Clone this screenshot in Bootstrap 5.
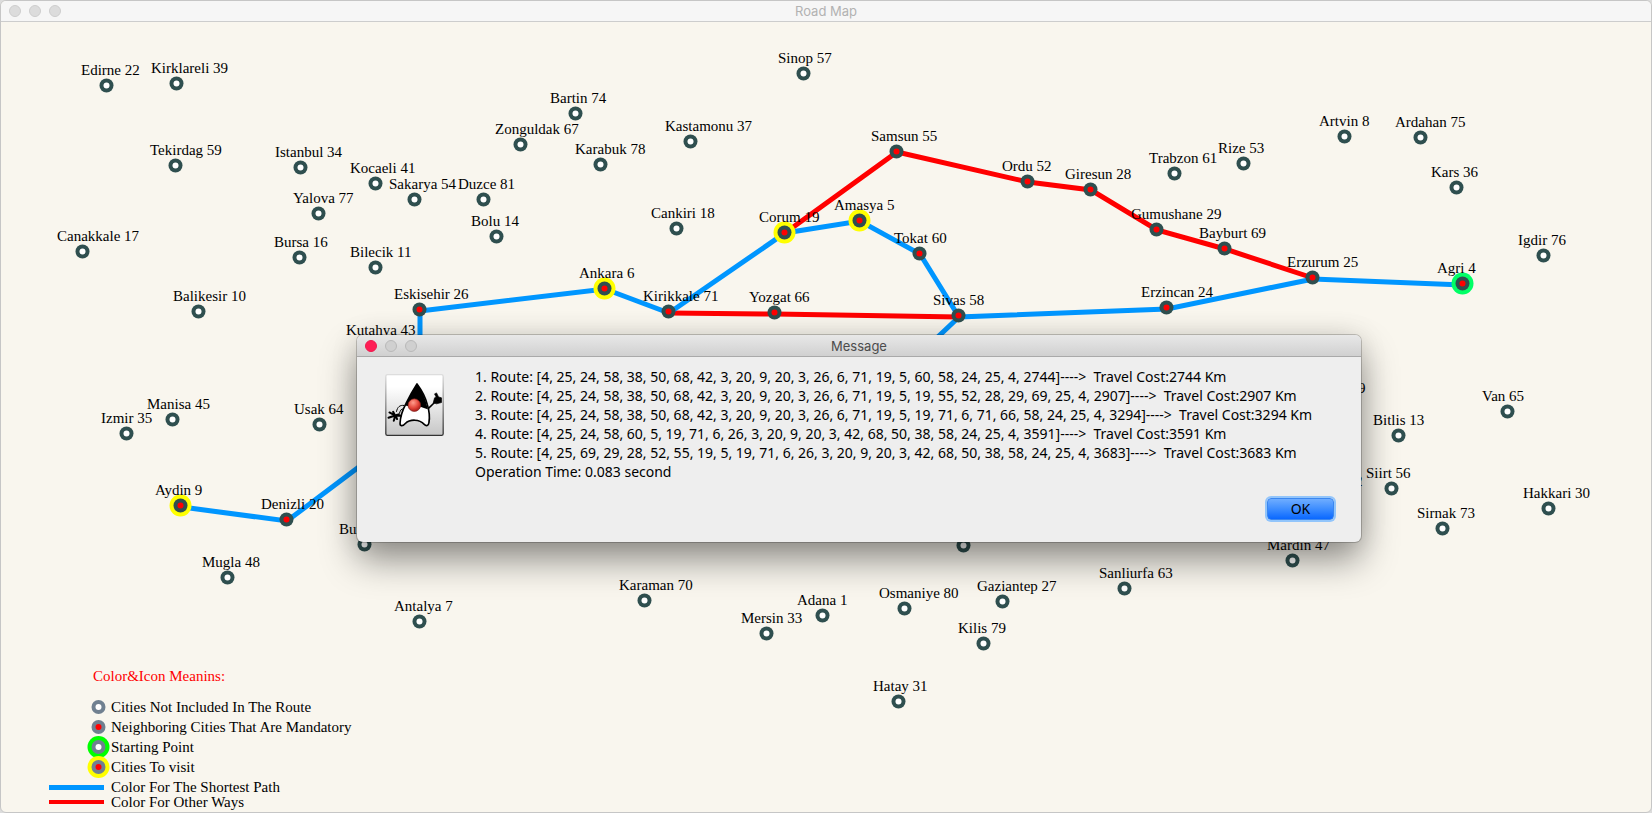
<!DOCTYPE html>
<html lang="en">
<head>
<meta charset="utf-8">
<meta name="viewport" content="width=device-width, initial-scale=1">
<title>Road Map</title>
<link href="https://cdn.jsdelivr.net/npm/bootstrap@5.3.0/dist/css/bootstrap.min.css" rel="stylesheet">
<style>
  body { background: #dcdcdc; }
  .window { border: 1px solid #c6c6c6; border-radius: 6px; background: #f9f6ee; }
  .titlebar { height: 21px; background: #f6f6f6; border-bottom: 1px solid #cdcdcd; font: 13px/20px Inter, sans-serif; color: #b2b2b2; }
  .lights { left: 8px; top: 4px; }
  .dot { width: 12px; height: 12px; border-radius: 50%; background: #dcdcdc; border: 1px solid #cdcdcd; }
  .map-area { font: 15px/20px "Liberation Serif", serif; color: #000; }
  .map-svg { left: -1px; top: -22px; overflow: visible; }
  .way { fill: none; stroke: #f00; stroke-width: 5; }
  .shortest { fill: none; stroke: #0096ff; stroke-width: 5; }

  .legend-title { color: #f00; padding-left: 92px; margin-bottom: 11px; }
  .legend-row { height: 20px; }
  .legend-row.tight { height: 10px; line-height: 10px; }
  .legend-mark { width: 103px; margin-right: 7px; height: 20px; overflow: visible; }
  .legend { padding-bottom: 5px; }

  .message { left: 356px; top: 334px; width: 1004px; border-radius: 6px; background: #eee;
    box-shadow: 0 0 0 1px rgba(0,0,0,.2), 0 18px 36px rgba(0,0,0,.42), 0 0 28px rgba(0,0,0,.1); }
  .message .titlebar { height: 22px; line-height: 22px; background: linear-gradient(#e8e8e8, #d0d0d0); border-color: #a9a9a9; color: #4c4c4c; border-radius: 6px 6px 0 0; }
  .message .lights { top: 5px; }
  .message .dot { background: #d0d0d0; border-color: #b9b9b9; }
  .message .dot.close-dot { background: #ff1d55; border-color: #ee1a4e; padding: 0; }
  .message-main { padding: 10px 20px 0 28px; gap: 31px; font: 14px/19px "Noto Sans", sans-serif; color: #000; }
  .duke { width: 59px; height: 62px; margin-top: 7px; flex: none; }
  .message-foot { padding: 17px 27px 22px; }
  .ok-btn { width: 67px; height: 22px; padding: 0; border: 1px solid #3b87f0; border-radius: 4px; font: 14px/20px "Noto Sans", sans-serif; color: #000;
    background: linear-gradient(#6fadff, #3d8dff 50%, #0a68ff); box-shadow: 0 0 0 2px #92c5fb; }
</style>
</head>
<body>
<div class="window vh-100 d-flex flex-column overflow-hidden position-relative">
  <header class="titlebar text-center position-relative flex-shrink-0">
    <div class="lights position-absolute d-flex gap-2"><span class="dot"></span><span class="dot"></span><span class="dot"></span></div>
    Road Map
  </header>

  <main class="map-area flex-grow-1 position-relative d-flex flex-column justify-content-end">
    <svg class="map-svg position-absolute w-100 h-100" aria-label="Cities and routes">
      <defs>
        <g id="plain"><circle r="7" fill="#2f4f4f"/><circle r="3" fill="#fff"/></g>
        <g id="stop"><circle r="7" fill="#2f4f4f"/><circle r="3" fill="#f00"/></g>
        <g id="visit"><circle r="11" fill="#ff0"/><use href="#stop"/></g>
        <g id="start"><circle r="11" fill="#00ff66"/><use href="#stop"/></g>
      </defs>
      <polyline class="way" points="785,233 897,152 1028,182 1091,190 1157,230 1225,249 1313,278"/>
      <polyline class="way" points="669,313 775,314 959,317"/>
      <polyline class="shortest" points="1463,285 1313,279 1167,309 959,317 869,402"/>
      <polyline class="shortest" points="182,507 287,521 420,421 420,311 605,289 669,313 785,233 860,221 920,254 959,317"/>
      <g id="cities"></g>
    </svg>

    <section class="legend position-relative">
      <div class="legend-title">Color&amp;Icon Meanins:</div>
      <div class="legend-row d-flex"><svg class="legend-mark"><circle cx="97.5" cy="10" r="7" fill="#708090"/><circle cx="97.5" cy="10" r="3" fill="#fff"/></svg><span>Cities Not Included In The Route</span></div>
      <div class="legend-row d-flex"><svg class="legend-mark"><circle cx="97.5" cy="10" r="7" fill="#708090"/><circle cx="97.5" cy="10" r="3" fill="#f00"/></svg><span>Neighboring Cities That Are Mandatory</span></div>
      <div class="legend-row d-flex"><svg class="legend-mark"><circle cx="97.5" cy="10" r="11" fill="#0f0"/><circle cx="97.5" cy="10" r="7" fill="#708090"/><circle cx="97.5" cy="10" r="3" fill="#fff"/></svg><span>Starting Point</span></div>
      <div class="legend-row d-flex"><svg class="legend-mark"><circle cx="97.5" cy="10" r="11" fill="#ff0"/><circle cx="97.5" cy="10" r="7" fill="#708090"/><circle cx="97.5" cy="10" r="3" fill="#f00"/></svg><span>Cities To visit</span></div>
      <div class="legend-row d-flex"><svg class="legend-mark"><rect x="48" y="8" width="55" height="5" fill="#0096ff"/></svg><span>Color For The Shortest Path</span></div>
      <div class="legend-row tight d-flex"><svg class="legend-mark"><rect x="48" y="3" width="55" height="4" fill="#f00"/></svg><span>Color For Other Ways</span></div>
    </section>
  </main>

  <div class="message position-absolute" role="dialog" aria-labelledby="message-title">
    <div class="titlebar text-center position-relative">
      <div class="lights position-absolute d-flex gap-2"><button type="button" class="dot close-dot" aria-label="Close"></button><span class="dot"></span><span class="dot"></span></div>
      <span id="message-title">Message</span>
    </div>
    <div class="message-main d-flex">
      <svg class="duke" viewBox="15 16 177 187" aria-hidden="true">
        <defs>
          <linearGradient id="tile" x1="0" y1="0" x2="0" y2="1"><stop offset=".2" stop-color="#fff"/><stop offset="1" stop-color="#c6c6c6"/></linearGradient>
          <linearGradient id="edge" x1="0" y1="0" x2="0" y2="1"><stop offset="0" stop-color="#ddd"/><stop offset="1" stop-color="#333"/></linearGradient>
          <radialGradient id="nose" cx=".4" cy=".3" r=".7"><stop offset="0" stop-color="#ff9d8d"/><stop offset=".6" stop-color="#e4483c"/><stop offset="1" stop-color="#a81c18"/></radialGradient>
        </defs>
        <rect x="17" y="18" width="173" height="183" rx="5" fill="url(#tile)" stroke="url(#edge)" stroke-width="4"/>
        <path d="M77 107C86 88 98 66 111 46C123 62 136 84 142 108C147 124 150 146 147 163C146 172 139 174 133 168C118 152 91 151 75 166C67 175 59 173 60 164C61 144 68 124 77 107Z" fill="#fff" stroke="#000" stroke-width="5" stroke-linejoin="round"/>
        <path d="M76 111C86 88 98 66 111 46C123 62 138 88 143 122L121 115L88 114Z" fill="#000"/>
        <circle cx="103" cy="110" r="19" fill="url(#nose)" stroke="#7c1f1a" stroke-width="2"/>
        <path d="M72 111C60 109 52 115 49 130" fill="none" stroke="#000" stroke-width="3"/>
        <path d="M68 121C59 123 61 133 54 141" fill="none" stroke="#000" stroke-width="3"/>
        <path d="M28 132L44 141L56 138M25 148L45 141L62 142M41 157L46 140L51 152M39 130L46 143" fill="none" stroke="#000" stroke-width="6" stroke-linecap="round" stroke-linejoin="round"/>
        <path d="M144 121L164 102" fill="none" stroke="#000" stroke-width="5"/>
        <path d="M164 88L169 86L164 76L170 73L176 85L185 88L185 102L170 106L160 103Z" fill="#000" stroke="#000" stroke-width="2" stroke-linejoin="round"/>
      </svg>
      <div class="text-nowrap">
        <div>1. Route: [4, 25, 24, 58, 38, 50, 68, 42, 3, 20, 9, 20, 3, 26, 6, 71, 19, 5, 60, 58, 24, 25, 4, 2744]----&gt;&nbsp; Travel Cost:2744 Km</div>
        <div>2. Route: [4, 25, 24, 58, 38, 50, 68, 42, 3, 20, 9, 20, 3, 26, 6, 71, 19, 5, 19, 55, 52, 28, 29, 69, 25, 4, 2907]----&gt;&nbsp; Travel Cost:2907 Km</div>
        <div>3. Route: [4, 25, 24, 58, 38, 50, 68, 42, 3, 20, 9, 20, 3, 26, 6, 71, 19, 5, 19, 71, 6, 71, 66, 58, 24, 25, 4, 3294]----&gt;&nbsp; Travel Cost:3294 Km</div>
        <div>4. Route: [4, 25, 24, 58, 60, 5, 19, 71, 6, 26, 3, 20, 9, 20, 3, 42, 68, 50, 38, 58, 24, 25, 4, 3591]----&gt;&nbsp; Travel Cost:3591 Km</div>
        <div>5. Route: [4, 25, 69, 29, 28, 52, 55, 19, 5, 19, 71, 6, 26, 3, 20, 9, 20, 3, 42, 68, 50, 38, 58, 24, 25, 4, 3683]----&gt;&nbsp; Travel Cost:3683 Km</div>
        <div>Operation Time: 0.083 second</div>
      </div>
    </div>
    <div class="message-foot d-flex justify-content-end">
      <button type="button" class="ok-btn">OK</button>
    </div>
  </div>
</div>

<script src="https://cdn.jsdelivr.net/npm/bootstrap@5.3.0/dist/js/bootstrap.bundle.min.js"></script>
<script>
  // [label, x, y, marker]; the marker defaults to a city outside the route
  const cities = [
    ["Edirne 22", 106, 85], ["Kirklareli 39", 176, 83], ["Tekirdag 59", 175, 165], ["Istanbul 34", 300, 167],
    ["Kocaeli 41", 375, 183], ["Sakarya 54", 414, 199], ["Yalova 77", 318, 213], ["Canakkale 17", 82, 251],
    ["Bursa 16", 299, 257], ["Bilecik 11", 375, 267], ["Bartin 74", 575, 113], ["Zonguldak 67", 520, 144],
    ["Karabuk 78", 600, 164], ["Kastamonu 37", 690, 141], ["Duzce 81", 483, 199], ["Bolu 14", 496, 236],
    ["Cankiri 18", 676, 228], ["Corum 19", 784, 232, "visit"], ["Sinop 57", 803, 73], ["Samsun 55", 896, 151, "stop"],
    ["Ordu 52", 1027, 181, "stop"], ["Giresun 28", 1090, 189, "stop"], ["Trabzon 61", 1174, 173],
    ["Gumushane 29", 1156, 229, "stop"], ["Bayburt 69", 1224, 248, "stop"], ["Amasya 5", 859, 220, "visit"],
    ["Tokat 60", 919, 253, "stop"], ["Sivas 58", 958, 315, "stop"], ["Erzincan 24", 1166, 307, "stop"],
    ["Rize 53", 1243, 163], ["Artvin 8", 1344, 136], ["Ardahan 75", 1420, 137], ["Kars 36", 1456, 187],
    ["Igdir 76", 1543, 255], ["Erzurum 25", 1312, 277, "stop"], ["Agri 4", 1462, 283, "start"],
    ["Ankara 6", 604, 288, "visit"], ["Kirikkale 71", 668, 311, "stop"], ["Yozgat 66", 774, 312, "stop"],
    ["Balikesir 10", 198, 311], ["Eskisehir 26", 419, 309, "stop"], ["Kutahya 43", 371, 345],
    ["Manisa 45", 172, 419], ["Izmir 35", 126, 433], ["Usak 64", 319, 424], ["Aydin 9", 180, 505, "visit"],
    ["Denizli 20", 286, 519, "stop"], ["Burdur 15", 364, 544], ["Mugla 48", 227, 577], ["Antalya 7", 419, 621],
    ["Karaman 70", 644, 600], ["Mersin 33", 766, 633], ["Adana 1", 822, 615], ["Osmaniye 80", 904, 608],
    ["Gaziantep 27", 1002, 601], ["Kilis 79", 983, 643], ["Hatay 31", 898, 701], ["Adiyaman 2", 963, 545],
    ["Van 65", 1507, 411], ["Bitlis 13", 1398, 435], ["Siirt 56", 1391, 488], ["Sirnak 73", 1442, 528],
    ["Hakkari 30", 1548, 508], ["Mardin 47", 1292, 560], ["Sanliurfa 63", 1124, 588], ["Mus 49", 1345, 403],
    ["Batman 72", 1322, 496]
  ];
  document.getElementById("cities").innerHTML = cities.map(([label, x, y, marker = "plain"]) =>
    `<use href="#${marker}" x="${x + 0.5}" y="${y + 0.5}"/><text x="${x - 25}" y="${y - 10}">${label}</text>`
  ).join("");
</script>
</body>
</html>
